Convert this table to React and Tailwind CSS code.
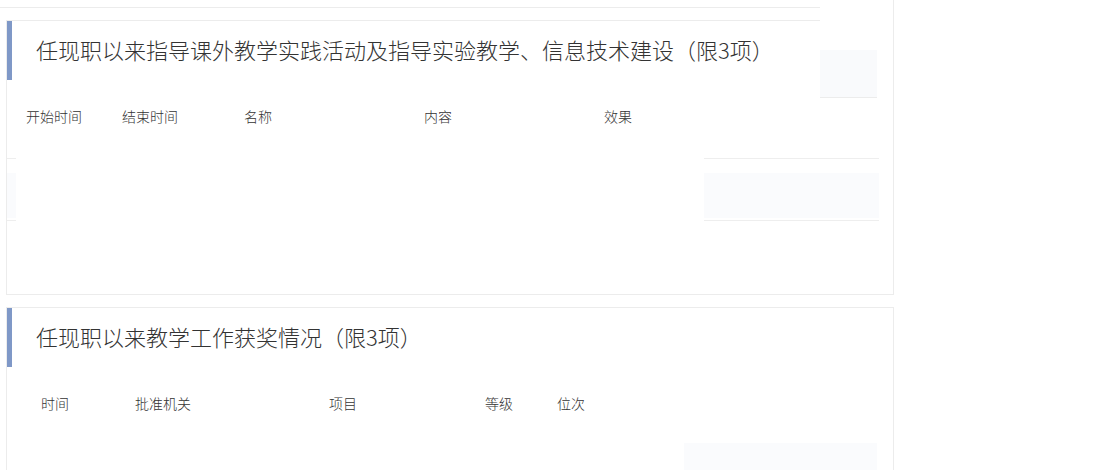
import React from 'react';

const font = { fontFamily: '"Microsoft YaHei", "Noto Sans CJK SC", "Noto Sans", sans-serif' };

const Title = ({ children }) => (
  <div className="flex h-[59px] items-center">
    <div className="w-[5px] self-stretch bg-[#7f98c7]" />
    <h2 className="ml-[24px] pb-[4px] text-[22px] leading-none font-light text-[#333] whitespace-nowrap">{children}</h2>
  </div>
);

const Activities = () => {
  const cols = [
    { label: '开始时间', w: 'w-[96px]' },
    { label: '结束时间', w: 'w-[122px]' },
    { label: '名称', w: 'w-[180px]' },
    { label: '内容', w: 'w-[180px]' },
    { label: '效果', w: 'w-[60px]' },
  ];

  return (
    <div className="h-[275px] w-[888px] border-x border-b border-[#ececec]">
      <div className="flex">
        <div className="w-[813px] border-t border-[#ececec]">
          <Title>任现职以来指导课外教学实践活动及指导实验教学、信息技术建设（限3项）</Title>
        </div>
        <div className="w-[57px] pt-[30px]">
          <div className="h-[48px] border-b border-[#ececec] bg-[#f9fafc]" />
        </div>
      </div>

      {/* table head */}
      <div className="flex h-[61px]">
        <div className="w-[9px] border-b border-[#eee]" />
        <div className="flex w-[688px] pl-[10px] pt-[8px] text-[14px] leading-[20px] font-light text-[#333]">
          {cols.map((c) => (
            <span key={c.label} className={c.w}>{c.label}</span>
          ))}
        </div>
        <div className="w-[175px] border-b border-[#eee]" />
      </div>

      {/* empty row */}
      <div className="flex h-[62px]">
        <div className="w-[9px] border-b border-[#eee] pt-[14px]">
          <div className="h-[45px] bg-[#fafbfd]" />
        </div>
        <div className="w-[688px]" />
        <div className="w-[175px] border-b border-[#eee] pt-[14px]">
          <div className="h-[45px] bg-[#fafbfd]" />
        </div>
      </div>
    </div>
  );
};

const Awards = () => {
  const cols = [
    { label: '时间', w: 'w-[94px]' },
    { label: '批准机关', w: 'w-[194px]' },
    { label: '项目', w: 'w-[156px]' },
    { label: '等级', w: 'w-[72px]' },
    { label: '位次', w: 'w-[60px]' },
  ];

  return (
    <div className="mt-[12px] h-[170px] w-[888px] border-x border-t border-[#ececec]">
      <Title>任现职以来教学工作获奖情况（限3项）</Title>
      <div className="flex h-[76px] pl-[34px] pt-[26px] text-[14px] leading-[20px] font-light text-[#333]">
        {cols.map((c) => (
          <span key={c.label} className={c.w}>{c.label}</span>
        ))}
      </div>
      <div className="ml-[677px] h-[40px] w-[193px] bg-[#fafbfd]" />
    </div>
  );
};

export default function App() {
  return (
    <div className="h-[470px] w-[1095px] overflow-hidden bg-white" style={font}>
      <div className="w-[894px]">
        <div className="flex h-[20px]">
          <div className="h-[8px] w-[820px] border-b border-[#ececec]" />
          <div className="h-[20px] w-[74px] border-r border-[#ececec]" />
        </div>
        <div className="ml-[6px]">
          <Activities />
          <Awards />
        </div>
      </div>
    </div>
  );
}
